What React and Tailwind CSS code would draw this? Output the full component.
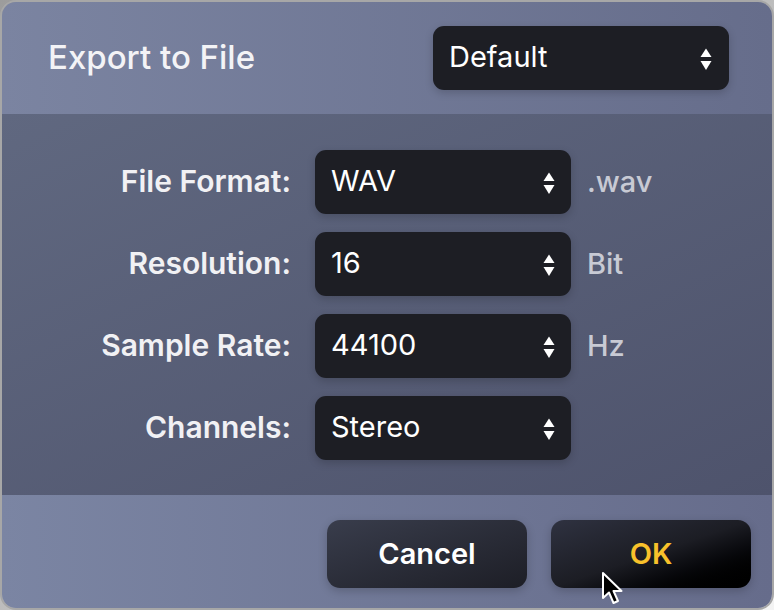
import React from 'react';

const font = { fontFamily: 'Inter, "Noto Sans", sans-serif' };

const Stepper = () => (
  <svg width="12" height="28" viewBox="0 0 12 28" className="shrink-0">
    <path d="M6 4.5 L11.5 13 L0.5 13 Z" fill="#ffffff" />
    <path d="M0.5 17 L11.5 17 L6 26 Z" fill="#ffffff" />
  </svg>
);

const Select = ({ value, className = '' }) => (
  <div
    className={`flex items-center justify-between h-[64px] rounded-[11px] bg-[#1d1e24] pl-4 pr-4 shadow-[0_3px_8px_rgba(0,0,0,0.18)] ${className}`}
  >
    <span className="pb-[3px] text-[29px] text-white leading-none">{value}</span>
    <Stepper />
  </div>
);

const rows = [
  { label: 'File Format:', value: 'WAV', unit: '.wav' },
  { label: 'Resolution:', value: '16', unit: 'Bit' },
  { label: 'Sample Rate:', value: '44100', unit: 'Hz' },
  { label: 'Channels:', value: 'Stereo', unit: '' },
];

const Cursor = () => (
  <svg width="24" height="36" viewBox="0 0 24 36" className="absolute left-[601px] top-[571px]">
    <path
      d="M2 2 L2 27 L8 21.5 L12.5 32 L17 30 L12.5 20 L20.5 20 Z"
      fill="#000000"
      stroke="#ffffff"
      strokeWidth="2"
      strokeLinejoin="round"
    />
  </svg>
);

export default function App() {
  return (
    <div className="relative w-[774px] h-[610px] bg-gradient-to-br from-[#9c9c9c] via-[#bdbdbd] to-[#f4f4f4]" style={font}>
      <div className="flex flex-col w-full h-full rounded-[16px] border-2 border-[#a7a7a7] overflow-hidden">
        {/* header */}
        <div className="flex items-start justify-between h-[112px] pl-[46px] pr-[43px] pt-[24px] bg-gradient-to-r from-[#7b84a1] to-[#666d8b]">
          <h1 className="mt-[15px] text-[33px] font-medium text-[#f3f3f6] leading-none">Export to File</h1>
          <Select value="Default" className="w-[296px] pr-[17px]" />
        </div>

        {/* settings */}
        <div className="flex flex-col gap-[18px] h-[381px] pt-[36px] bg-gradient-to-br from-[#606880] to-[#4e536c]">
          {rows.map((row) => (
            <div key={row.label} className="flex items-center">
              <span className="w-[289px] pb-[2px] text-right text-[30px] font-semibold text-[#f1f1f4] leading-none">
                {row.label}
              </span>
              <Select value={row.value} className="ml-[24px] w-[256px]" />
              <span className="ml-[16px] pb-[2px] text-[29px] font-medium text-[#c8cad4] leading-none">{row.unit}</span>
            </div>
          ))}
        </div>

        {/* footer */}
        <div className="flex flex-1 justify-end items-start gap-[24px] pt-[25px] pr-[21px] bg-gradient-to-r from-[#7b85a3] to-[#666c8b]">
          <button className="w-[200px] h-[68px] rounded-[13px] bg-gradient-to-br from-[#393d4c] to-[#1d1e26] text-[29px] font-semibold text-white shadow-[0_3px_10px_rgba(0,0,0,0.2)]">
            Cancel
          </button>
          <button className="w-[200px] h-[68px] rounded-[13px] bg-gradient-to-br from-[#2f3241] via-[#1c1d24] to-[#000000] text-[29px] font-semibold text-[#f8c12b] shadow-[0_3px_10px_rgba(0,0,0,0.2)]">
            OK
          </button>
        </div>
      </div>
      <Cursor />
    </div>
  );
}
